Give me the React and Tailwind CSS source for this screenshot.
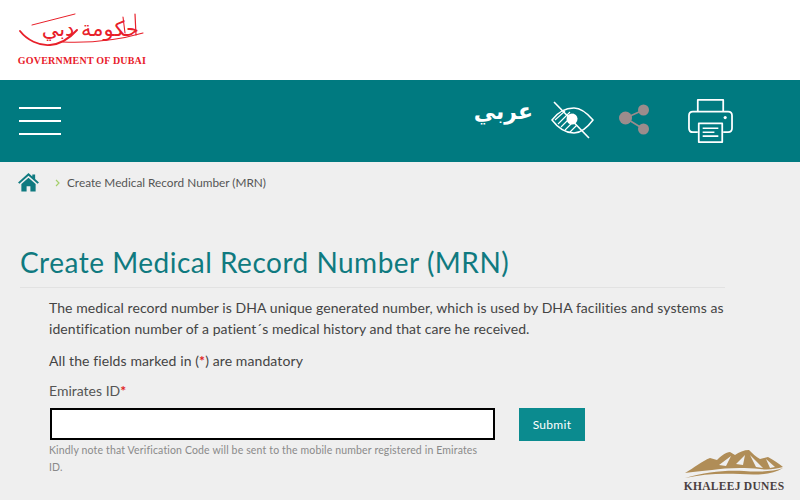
import React from "react";

const fontClass = "font-['Lato','Noto_Sans',sans-serif]";

function GovLogo() {
  return (
    <div className="flex w-[130px] flex-col items-center">
      <div className="relative h-[41px] w-[126px]">
        <svg viewBox="0 0 126 41" className="absolute inset-0 h-full w-full" fill="none" stroke="#e8202a" strokeLinecap="round">
          {/* long strokes of the calligraphy */}
          <path d="M1 18 C8 27 20 33 31 32 C42 31 50 26 58 17" strokeWidth="1.9" />
          <path d="M13 12 L56 1" strokeWidth="1" />
          <path d="M44 29 C70 30 100 27 124 20" strokeWidth="1.1" />
          <path d="M116 1 L117 22" strokeWidth="1.2" />
          <path d="M104 4 L106 20" strokeWidth="1.1" />
        </svg>
        <span dir="rtl" className="absolute right-[6px] top-[1px] whitespace-nowrap font-['DejaVu_Sans',sans-serif] text-[21px] font-normal leading-[30px] text-[#e8202a]">
          حكومة دبي
        </span>
      </div>
      <div className="mt-[1px] whitespace-nowrap font-['Liberation_Serif',serif] text-[10px] font-bold leading-[12px] tracking-[0.2px] text-[#e8202a]">
        GOVERNMENT OF DUBAI
      </div>
    </div>
  );
}

function EyeOffIcon() {
  return (
    <svg width="44" height="40" viewBox="0 0 44 40" fill="none" stroke="#fff" strokeWidth="1.5">
      <path d="M2 19 C8 11 15 7 24 7 C31 7 37 12 43 19 C37 27 31 32 24 32 C15 32 8 27 2 19 Z" />
      <circle cx="22" cy="18" r="5.5" fill="#fff" stroke="none" />
      <path d="M5 19 L15 10 M8 23 L20 11 M11 26 L24 13 M15 29 L27 17 M20 31 L27 24" strokeWidth="1.1" />
      <path d="M4 1 L39 37" strokeWidth="1.6" />
    </svg>
  );
}

function ShareIcon() {
  return (
    <svg width="31" height="31" viewBox="0 0 31 31" fill="#9c8c8c">
      <path d="M6.5 14 L24.5 6 M6.5 14 L24.5 25" stroke="#9c8c8c" strokeWidth="1.6" />
      <circle cx="6.5" cy="14" r="6.5" />
      <circle cx="24.5" cy="6" r="5.5" />
      <circle cx="24.5" cy="25" r="5.5" />
    </svg>
  );
}

function PrintIcon() {
  return (
    <svg width="45" height="45" viewBox="0 0 46 46" fill="none" stroke="#fff" strokeWidth="1.8" strokeLinejoin="round">
      <path d="M10 14 V2 H36 V14" />
      <path d="M10 35 H5 Q1 35 1 31 V18 Q1 14 5 14 H41 Q45 14 45 18 V31 Q45 35 41 35 H36" />
      <rect x="11" y="26" width="24" height="19" />
      <path d="M15 31 H31 M15 35 H27 M15 39 H31" strokeWidth="1.6" />
      <circle cx="38" cy="20" r="1.6" fill="#fff" stroke="none" />
    </svg>
  );
}

function HomeIcon() {
  return (
    <svg width="21" height="19" viewBox="0 0 22 20" fill="#0f7a80">
      <path d="M11 0 L15 3.6 V1.5 H18 V6.3 L22 10 L20.6 11.4 L11 3 L1.4 11.4 L0 10 Z" />
      <path d="M3.5 11.5 L11 5 L18.5 11.5 V19.5 H13 V14 H9 V19.5 H3.5 Z" />
    </svg>
  );
}

function DunesLogo() {
  return (
    <div className="absolute left-[684px] top-[449px] flex w-[100px] flex-col items-center">
      <svg width="100" height="30" viewBox="0 0 100 30">
        <path d="M1 24 C10 19 18 12 26 9 L33 11 C37 7 42 3 46 3 L51 6 C55 3 60 1 65 1 C69 5 72 8 76 10 L84 8 C90 11 95 15 99 18 C92 20 84 21 76 20 C58 18 40 19 28 21 C18 22 8 23 1 24 Z" fill="#b08d57" />
        <path d="M35 16 L47 7 L42 17 Z M52 15 L61 6 L59 16 Z M66 6 L79 19 L72 18 Z M82 10 L91 18 L86 19 Z" fill="#efefef" />
        <path d="M1 29 C22 23 40 21 60 22 C72 23 88 23 99 19 C88 26 72 26 56 25 C36 24 18 25 1 29 Z" fill="#b08d57" />
      </svg>
      <div className="whitespace-nowrap font-['Liberation_Serif',serif] text-[11.5px] font-bold leading-[14px] tracking-[0.3px] text-[#4a3f3f]">
        KHALEEJ DUNES
      </div>
    </div>
  );
}

export default function App() {
  return (
    <div className={`relative h-[500px] w-[800px] overflow-hidden bg-[#efefef] ${fontClass}`}>
      {/* Logo bar */}
      <div className="flex h-[80px] items-start bg-white pl-[17px] pt-[13px]">
        <GovLogo />
      </div>

      {/* Teal header */}
      <div className="flex h-[82px] items-center bg-[#007a80] pl-[19px]">
        <div className="flex w-[42px] flex-col gap-[11px]">
          <div className="h-[2px] bg-white" />
          <div className="h-[2px] bg-white" />
          <div className="h-[2px] bg-white" />
        </div>
        <div dir="rtl" className="ml-[414px] mt-[-19px] w-[58px] whitespace-nowrap font-['DejaVu_Sans',sans-serif] text-[22px] font-bold leading-[30px] text-white">
          عربي
        </div>
        <div className="ml-[17px] mt-[-1px]">
          <EyeOffIcon />
        </div>
        <div className="ml-[25px] mt-[-4px]">
          <ShareIcon />
        </div>
        <div className="ml-[38px] mt-[-2px]">
          <PrintIcon />
        </div>
      </div>

      {/* Breadcrumb */}
      <div className="flex h-[40px] items-center pl-[18px] pt-[1px]">
        <HomeIcon />
        <svg width="5" height="8" viewBox="0 0 5 8" fill="none" stroke="#a5cf6b" strokeWidth="1.2" className="ml-[16px]">
          <path d="M1 1 L4 4 L1 7" />
        </svg>
        <span className="ml-[7px] text-[11.8px] text-[#555]">Create Medical Record Number (MRN)</span>
      </div>

      {/* Title */}
      <div className="ml-[20px] mr-[75px] mt-[40px] h-[46px] border-b border-[#e2e2e2]">
        <h1 className="text-[28px] font-normal leading-[40px] tracking-[0.5px] text-[#0f7a80]">
          Create Medical Record Number (MRN)
        </h1>
      </div>

      {/* Body */}
      <div className="pl-[49px] pt-[9px]">
        <p className="w-[690px] text-[14px] leading-[21px] tracking-[0.08px] text-[#444]">
          The medical record number is DHA unique generated number, which is used by DHA facilities and systems as identification number of a patient´s medical history and that care he received.
        </p>
        <p className="mt-[12px] text-[14px] leading-[20px] tracking-[0.1px] text-[#444]">
          All the fields marked in (<span className="font-bold text-[#e02020]">*</span>) are mandatory
        </p>
        <label className="mt-[10px] block text-[14px] leading-[20px] text-[#555]">
          Emirates ID<span className="font-bold text-[#e02020]">*</span>
        </label>

        <div className="mt-[7px] flex items-start">
          <div className="w-[445px] pl-[1px]">
            <input className="block h-[32px] w-[445px] border-[2px] border-black bg-white outline-none" />
            <p className="ml-[-1px] mt-[2px] w-[434px] text-[10.5px] leading-[17px] tracking-[0.15px] text-[#8a8a8a]">
              Kindly note that Verification Code will be sent to the mobile number registered in Emirates ID.
            </p>
          </div>
          <button className="ml-[25px] h-[33px] w-[66px] bg-[#0b8b8f] text-[12px] tracking-[0.3px] text-white">
            Submit
          </button>
        </div>
      </div>

      <DunesLogo />
    </div>
  );
}
